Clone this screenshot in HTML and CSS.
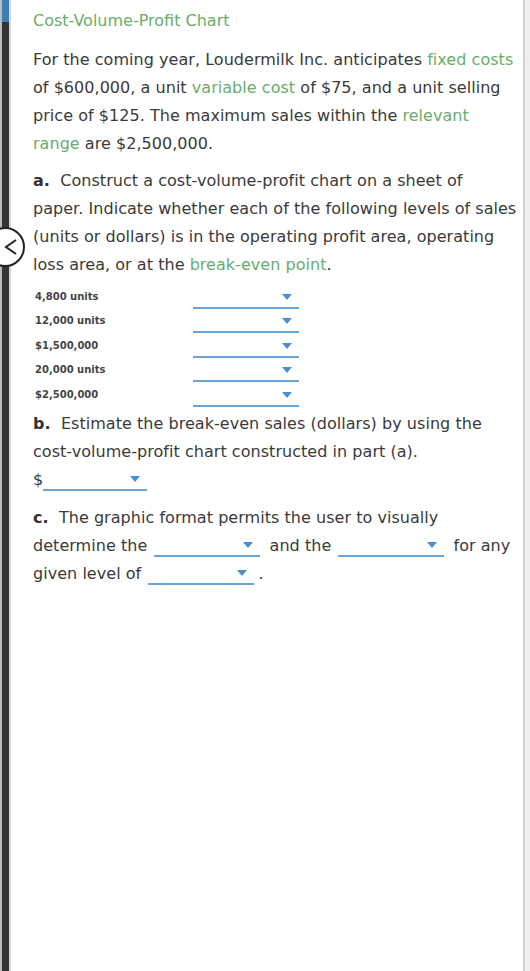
FILE: index.html
```html
<!DOCTYPE html>
<html>
<head>
<meta charset="utf-8">
<link rel="stylesheet" href="styles.css">
</head>
<body>
<div class="frame">
  <div class="rail"><div class="rail-tab"></div></div>
  <main class="content">
    <h1 class="title">Cost-Volume-Profit Chart</h1>
    <p class="para">For the coming year, Loudermilk Inc. anticipates <span class="term">fixed costs</span> of $600,000, a unit <span class="term">variable cost</span> of $75, and a unit selling price of $125. The maximum sales within the <span class="term">relevant range</span> are $2,500,000.</p>

    <p class="para part"><b>a.</b>&nbsp; Construct a cost-volume-profit chart on a sheet of paper. Indicate whether each of the following levels of sales (units or dollars) is in the operating profit area, operating loss area, or at the <span class="term">break-even point</span>.</p>

    <div class="rows">
      <div class="row"><span class="lbl">4,800 units</span><span class="dd"></span></div>
      <div class="row"><span class="lbl">12,000 units</span><span class="dd"></span></div>
      <div class="row"><span class="lbl">$1,500,000</span><span class="dd"></span></div>
      <div class="row"><span class="lbl">20,000 units</span><span class="dd"></span></div>
      <div class="row"><span class="lbl">$2,500,000</span><span class="dd"></span></div>
    </div>

    <p class="para part-b"><b>b.</b>&nbsp; Estimate the break-even sales (dollars) by using the cost-volume-profit chart constructed in part (a).</p>
    <p class="para dollar">$<span class="dd dd-inline"></span></p>

    <p class="para part-c"><b>c.</b>&nbsp; The graphic format permits the user to visually determine the <span class="dd dd-inline"></span> and the <span class="dd dd-inline"></span> for any given level of <span class="dd dd-inline"></span>.</p>
  </main>
  <div class="right-rail"></div>
  <button class="back" aria-label="Back"><svg width="16" height="20" viewBox="0 0 16 20"><path d="M13 3 L3 10 L13 17" fill="none" stroke="#222" stroke-width="2"/></svg></button>
</div>
</body>
</html>
```

FILE: styles.css
```css
html, body {
  margin: 0;
  padding: 0;
  height: 100%;
  background: #fff;
}
.frame {
  position: relative;
  display: flex;
  height: 971px;
  overflow: hidden;
  font-family: "DejaVu Sans", Verdana, sans-serif;
  color: #3a3a3a;
}
.rail {
  flex: none;
  width: 11px;
  background: #353535;
  border-left: 2px solid #bdbdbd;
  border-right: 2px solid #d6d6d6;
  box-sizing: border-box;
}
.rail-tab {
  height: 22px;
  background: #3b7fb6;
}
.content {
  flex: 1;
  padding: 10px 6px 0 22px;
}
.right-rail {
  width: 5px;
  flex: none;
  background: #efefef;
  border-left: 2px solid #cfcfcf;
}
.title {
  margin: 0;
  font-size: 16px;
  font-weight: normal;
  color: #69ad6c;
  line-height: 22px;
}
.para {
  margin: 0;
  font-size: 16px;
  line-height: 28px;
  letter-spacing: 0.04px;
}
.title + .para { margin-top: 14px; }
.term { color: #69ad6c; }
.part { margin-top: 9px; }
b {
  font-weight: bold;
  color: #333;
}
.rows {
  margin-top: 5px;
  display: flex;
  flex-direction: column;
}
.row {
  display: flex;
  align-items: flex-end;
  height: 24.5px;
}
.lbl {
  width: 158px;
  padding-left: 2px;
  font-size: 10px;
  font-weight: bold;
  color: #444;
  line-height: 14px;
  margin-bottom: 5px;
}
.dd {
  position: relative;
  display: inline-block;
  width: 106px;
  height: 18px;
  border-bottom: 2px solid #6aa3d8;
  box-sizing: border-box;
}
.dd::after {
  content: "";
  position: absolute;
  right: 7px;
  top: 3px;
  border-left: 5px solid transparent;
  border-right: 5px solid transparent;
  border-top: 6px solid #4a8fcf;
}
.part-b { margin-top: 3px; }
.dollar .dd-inline { width: 104px; margin-left: 0; }
.dd-inline {
  vertical-align: -6px;
  margin: 0 4px 0 2px;
}
.part-c { margin-top: 10px; }
.back {
  position: absolute;
  left: -15px;
  top: 227px;
  width: 40px;
  height: 40px;
  border-radius: 50%;
  border: 2px solid #222;
  background: #fff;
  padding: 0 0 0 12px;
  display: flex;
  align-items: center;
  justify-content: center;
}
```
